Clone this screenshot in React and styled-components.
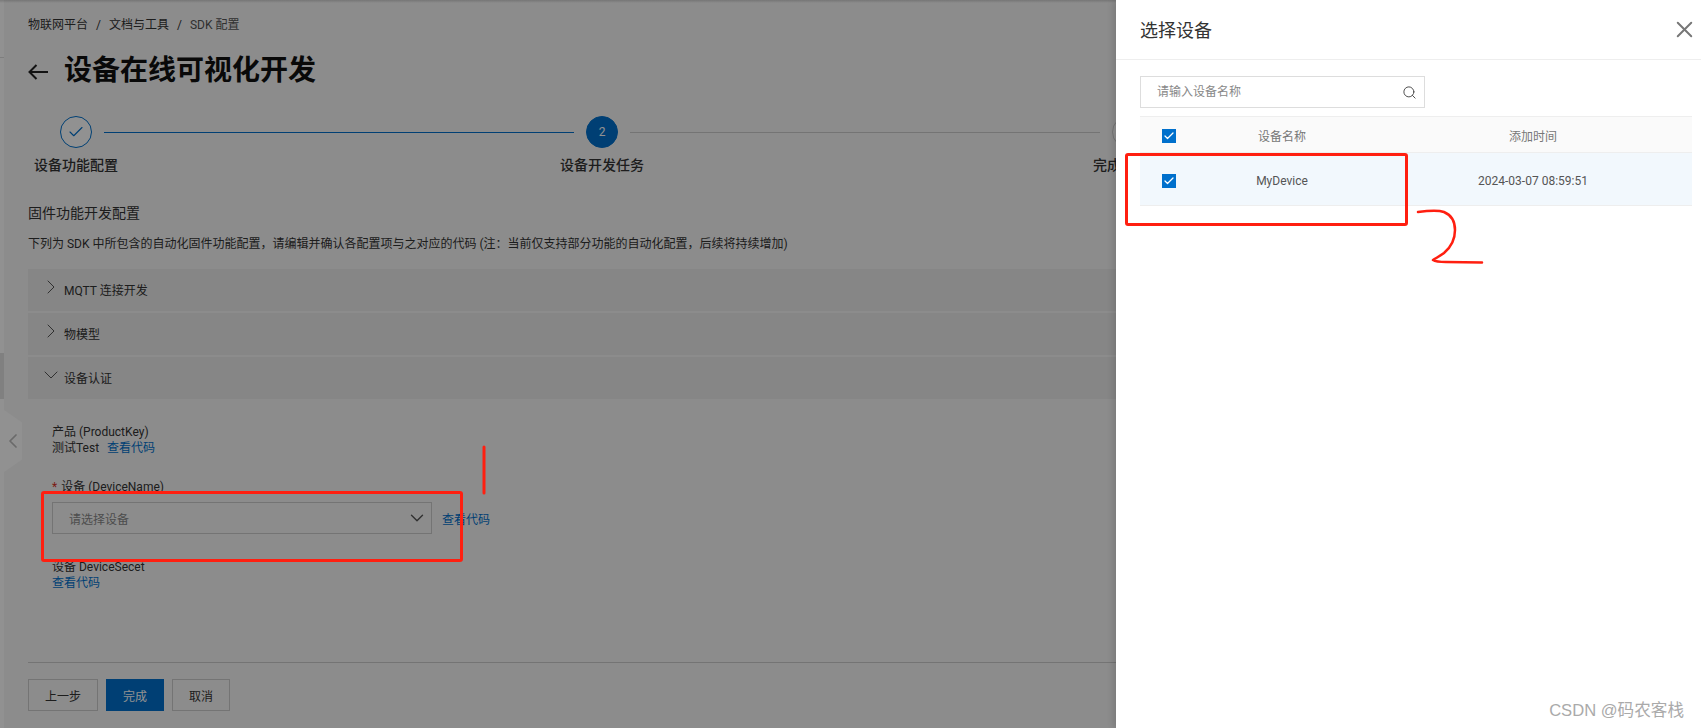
import React from "react";
import styled, { createGlobalStyle } from "styled-components";
import {
  Check,
  ChevronDown,
  ChevronLeft,
  ChevronRight,
  Search,
  X,
} from "lucide-react";

const GlobalStyle = createGlobalStyle`
  html, body {
    margin: 0;
    padding: 0;
    height: 100%;
    overflow: hidden;
  }
  body {
    font-family: Roboto, "Noto Sans CJK SC", sans-serif;
    font-size: 12px;
    color: #333;
  }
  * {
    box-sizing: border-box;
  }
  svg {
    flex-shrink: 0;
  }
`;

const Page = styled.div`
  position: relative;
  width: 1701px;
  height: 728px;
  display: flex;
  overflow: hidden;
  background: #f7f7f7;
`;

const SideStrip = styled.div`
  width: 4px;
  flex-shrink: 0;
  background: #fff;
  padding-top: 57px;
`;

const SideDivider = styled.div`
  height: 1px;
  background: #ddd;
`;

const SideActive = styled.div`
  height: 46px;
  margin-top: 295px;
  background: #e2e2e2;
`;

const CollapseHandle = styled.div`
  position: absolute;
  left: 4px;
  top: 410px;
  width: 18px;
  height: 62px;
  display: flex;
  align-items: center;
  justify-content: center;
  background: #fff;
  color: #bbb;
  clip-path: polygon(0 0, 100% 20%, 100% 80%, 0 100%);
`;

const Main = styled.main`
  flex: 1;
  padding: 15px 28px 0 24px;
  min-width: 0;
`;

const Breadcrumb = styled.div`
  display: flex;
  gap: 8px;
  line-height: 20px;
  color: #333;
`;

const Crumb = styled.span`
  color: ${(p) => (p.$last ? "#555" : "#333")};
`;

const TitleRow = styled.div`
  display: flex;
  align-items: center;
  gap: 16px;
  height: 40px;
  margin-top: 16px;
  color: #222;
`;

const BackArrow = styled.svg`
  width: 20px;
  height: 16px;
  margin-top: 2px;
`;

const Title = styled.h1`
  margin: 0;
  font-size: 28px;
  line-height: 40px;
  font-weight: 700;
  color: #111;
`;

const Steps = styled.div`
  display: flex;
  margin-top: 25px;
  padding-left: 32px;
`;

const Step = styled.div`
  width: 526px;
  flex-shrink: 0;
`;

const StepHead = styled.div`
  display: flex;
  align-items: center;
`;

const StepCircle = styled.div`
  width: 32px;
  height: 32px;
  flex-shrink: 0;
  border-radius: 50%;
  display: flex;
  align-items: center;
  justify-content: center;
  font-size: 12px;
  border: 1px solid ${(p) => (p.$state === "todo" ? "#ccc" : "#0070cc")};
  background: ${(p) => (p.$state === "active" ? "#0070cc" : "#fff")};
  color: ${(p) => (p.$state === "active" ? "#fff" : "#0070cc")};
`;

const StepLine = styled.div`
  flex: 1;
  height: 1px;
  margin: 0 12px;
  background: ${(p) => (p.$done ? "#0070cc" : "#ccc")};
`;

const StepLabel = styled.div`
  width: 96px;
  margin: 7px 0 0 -32px;
  text-align: center;
  font-size: 14px;
  line-height: 20px;
  font-weight: 500;
  white-space: nowrap;
  color: #333;
`;

const SectionTitle = styled.div`
  margin-top: 28px;
  font-size: 14px;
  line-height: 20px;
`;

const Description = styled.div`
  margin-top: 11px;
  line-height: 20px;
  color: #333;
`;

const Accordion = styled.div`
  display: flex;
  flex-direction: column;
  gap: 2px;
  margin-top: 15px;
`;

const AccordionRow = styled.div`
  height: 42px;
  display: flex;
  align-items: center;
  gap: 1px;
  padding: 0 0 2px 11px;
  background: #ebebeb;
  color: #333;
`;

const RowIcon = styled.span`
  display: flex;
  margin-bottom: 4px;
  color: #555;
`;

const Panel = styled.div`
  padding: 25px 0 0 24px;
`;

const TextLine = styled.div`
  display: flex;
  gap: 8px;
  line-height: 16px;
`;

const Link = styled.a`
  color: #0070cc;
`;

const FieldLabel = styled.div`
  margin-top: ${(p) => p.$top || 0}px;
  line-height: 16px;
`;

const Required = styled.span`
  color: #d93026;
  margin-right: 4px;
`;

const SelectRow = styled.div`
  display: flex;
  align-items: center;
  gap: 10px;
  margin-top: 7px;
`;

const SelectBox = styled.div`
  width: 380px;
  height: 32px;
  display: flex;
  align-items: center;
  justify-content: space-between;
  padding: 0 3px 0 16px;
  border: 1px solid #ccc;
  background: #f7f7f7;
  color: #888;
`;

const Footer = styled.div`
  margin-top: 71px;
  padding-top: 16px;
  border-top: 1px solid #ccc;
  display: flex;
  gap: 8px;
`;

const Button = styled.button`
  width: ${(p) => p.$width}px;
  height: 32px;
  padding: 0;
  font: inherit;
  border: 1px solid ${(p) => (p.$primary ? "#0070cc" : "#ccc")};
  background: ${(p) => (p.$primary ? "#0070cc" : "#f7f7f7")};
  color: ${(p) => (p.$primary ? "#fff" : "#333")};
`;

const Mask = styled.div`
  position: absolute;
  inset: 0;
  background: rgba(0, 0, 0, 0.43);
`;

const Drawer = styled.aside`
  position: absolute;
  top: 0;
  right: 0;
  bottom: 0;
  width: 585px;
  background: #fff;
  box-shadow: -3px 0 6px rgba(0, 0, 0, 0.12);
`;

const DrawerHeader = styled.header`
  height: 60px;
  display: flex;
  align-items: center;
  justify-content: space-between;
  padding: 0 3px 0 24px;
  border-bottom: 1px solid #eee;
  color: #777;
`;

const DrawerTitle = styled.div`
  padding-top: 2px;
  font-size: 18px;
  line-height: 24px;
  color: #333;
`;

const DrawerBody = styled.div`
  padding: 16px 9px 0 24px;
`;

const SearchBox = styled.div`
  width: 285px;
  height: 32px;
  display: flex;
  align-items: center;
  padding: 0 7px 0 16px;
  border: 1px solid #ddd;
  color: #444;
`;

const SearchInput = styled.input`
  flex: 1;
  min-width: 0;
  border: 0;
  outline: 0;
  padding: 0;
  font: inherit;
  background: transparent;
  &::placeholder {
    color: #888;
    opacity: 1;
  }
`;

const TableRow = styled.div`
  display: grid;
  grid-template-columns: 58px 168px 1fr;
  align-items: center;
  text-align: center;
  height: ${(p) => (p.$head ? 37 : 53)}px;
  margin-top: ${(p) => (p.$head ? 8 : 0)}px;
  padding-top: ${(p) => (p.$head ? 2 : 3)}px;
  border-top: ${(p) => (p.$head ? "1px solid #eee" : "0")};
  border-bottom: 1px solid #eee;
  background: ${(p) => (p.$head ? "#fafafa" : "#f2f8fd")};
  color: ${(p) => (p.$head ? "#777" : "#555")};
  & > span:nth-child(3) {
    padding-left: 8px;
  }
`;

const CheckBox = styled.span`
  width: 14px;
  height: 14px;
  justify-self: center;
  display: flex;
  align-items: center;
  justify-content: center;
  background: #0070cc;
  color: #fff;
`;

const Watermark = styled.div`
  position: absolute;
  right: 17px;
  bottom: 7px;
  font-family: "Liberation Sans", "Noto Sans CJK SC", sans-serif;
  font-size: 16.6px;
  line-height: 20px;
  color: #aaa;
`;

const TopShade = styled.div`
  position: absolute;
  top: 0;
  left: 0;
  right: 0;
  height: 3px;
  background: linear-gradient(rgba(0, 0, 0, 0.16), rgba(0, 0, 0, 0));
`;

const Annotations = styled.svg`
  position: absolute;
  inset: 0;
  pointer-events: none;
`;

const App = () => {
  return (
    <Page>
      <GlobalStyle />
      <SideStrip>
        <SideDivider />
        <SideActive />
      </SideStrip>
      <CollapseHandle>
        <ChevronLeft size={24} strokeWidth={1.75} />
      </CollapseHandle>
      <Main>
        <Breadcrumb>
          <Crumb>物联网平台</Crumb>
          <Crumb>/</Crumb>
          <Crumb>文档与工具</Crumb>
          <Crumb>/</Crumb>
          <Crumb $last>SDK 配置</Crumb>
        </Breadcrumb>
        <TitleRow>
          <BackArrow viewBox="0 0 20 16" fill="none" stroke="currentColor" strokeWidth="2">
            <path d="M20 8H1.5M8.5 1 1.5 8l7 7" />
          </BackArrow>
          <Title>设备在线可视化开发</Title>
        </TitleRow>
        <Steps>
          <Step>
            <StepHead>
              <StepCircle $state="done">
                <Check size={18} strokeWidth={1.5} />
              </StepCircle>
              <StepLine $done />
            </StepHead>
            <StepLabel>设备功能配置</StepLabel>
          </Step>
          <Step>
            <StepHead>
              <StepCircle $state="active">2</StepCircle>
              <StepLine />
            </StepHead>
            <StepLabel>设备开发任务</StepLabel>
          </Step>
          <Step>
            <StepHead>
              <StepCircle $state="todo">3</StepCircle>
            </StepHead>
            <StepLabel>完成并部署</StepLabel>
          </Step>
        </Steps>
        <SectionTitle>固件功能开发配置</SectionTitle>
        <Description>
          下列为 SDK 中所包含的自动化固件功能配置，请编辑并确认各配置项与之对应的代码 (注：当前仅支持部分功能的自动化配置，后续将持续增加)
        </Description>
        <Accordion>
          <AccordionRow>
            <RowIcon>
              <ChevronRight size={24} strokeWidth={1} />
            </RowIcon>
            MQTT 连接开发
          </AccordionRow>
          <AccordionRow>
            <RowIcon>
              <ChevronRight size={24} strokeWidth={1} />
            </RowIcon>
            物模型
          </AccordionRow>
          <AccordionRow>
            <RowIcon>
              <ChevronDown size={24} strokeWidth={1} />
            </RowIcon>
            设备认证
          </AccordionRow>
        </Accordion>
        <Panel>
          <FieldLabel>产品 (ProductKey)</FieldLabel>
          <TextLine>
            <span>测试Test</span>
            <Link>查看代码</Link>
          </TextLine>
          <FieldLabel $top={23}>
            <Required>*</Required>设备 (DeviceName)
          </FieldLabel>
          <SelectRow>
            <SelectBox>
              请选择设备
              <ChevronDown size={22} strokeWidth={1.5} color="#555" />
            </SelectBox>
            <Link>查看代码</Link>
          </SelectRow>
          <FieldLabel $top={25}>设备 DeviceSecet</FieldLabel>
          <TextLine>
            <Link>查看代码</Link>
          </TextLine>
        </Panel>
        <Footer>
          <Button $width={70}>上一步</Button>
          <Button $width={58} $primary>
            完成
          </Button>
          <Button $width={58}>取消</Button>
        </Footer>
      </Main>
      <Mask />
      <TopShade />
      <Drawer>
        <DrawerHeader>
          <DrawerTitle>选择设备</DrawerTitle>
          <X size={27} strokeWidth={1.75} />
        </DrawerHeader>
        <DrawerBody>
          <SearchBox>
            <SearchInput placeholder="请输入设备名称" readOnly />
            <Search size={15} strokeWidth={1.5} />
          </SearchBox>
          <TableRow $head>
            <CheckBox>
              <Check size={12} strokeWidth={2.5} />
            </CheckBox>
            <span>设备名称</span>
            <span>添加时间</span>
          </TableRow>
          <TableRow>
            <CheckBox>
              <Check size={12} strokeWidth={2.5} />
            </CheckBox>
            <span>MyDevice</span>
            <span>2024-03-07 08:59:51</span>
          </TableRow>
        </DrawerBody>
        <Watermark>CSDN @码农客栈</Watermark>
      </Drawer>
      <Annotations width="1701" height="728" fill="none" stroke="#ff1f10">
        <rect x="42.5" y="492.5" width="419" height="68" rx="1.5" strokeWidth="3" />
        <path d="M484 447 V493" strokeWidth="3" strokeLinecap="round" />
        <rect x="1126.5" y="154.5" width="280" height="70" rx="1.5" strokeWidth="3" />
        <path
          d="M1418 212 C1426 211 1438 210 1444 212 C1451 215 1455 221 1455 230 C1455 240 1450 248 1444 253 C1440 256 1436 258 1433 260 C1436 262 1440 262 1446 262 L1482 262.5"
          strokeWidth="2.5"
          strokeLinecap="round"
          strokeLinejoin="round"
        />
      </Annotations>
    </Page>
  );
};

export default App;
